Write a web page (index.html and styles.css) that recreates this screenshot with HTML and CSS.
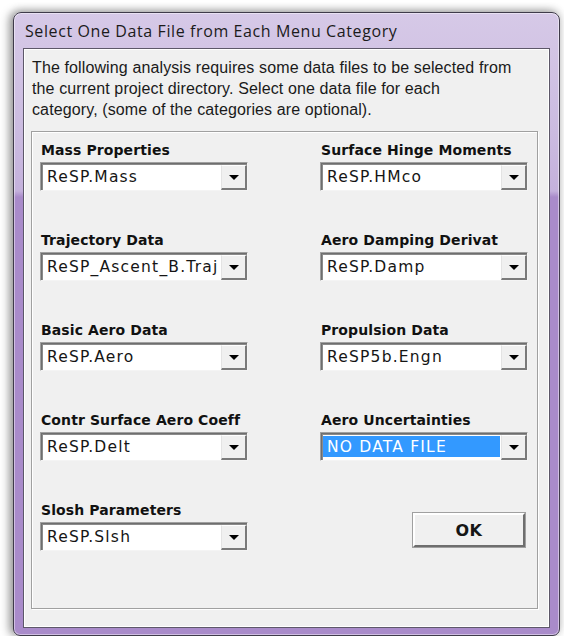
FILE: index.html
```html
<!DOCTYPE html>
<html lang="en">
<head>
<meta charset="utf-8">
<title>Select One Data File from Each Menu Category</title>
<link rel="stylesheet" href="styles.css">
</head>
<body>
<div class="window">
  <div class="titlebar">Select One Data File from Each Menu Category</div>
  <div class="client">
    <p class="intro">The following analysis requires some data files to be selected from<br>the current project directory. Select one data file for each<br>category, (some of the categories are optional).</p>
    <div class="group">
      <div class="field">
        <div class="label">Mass Properties</div>
        <div class="combo"><span class="value">ReSP.Mass</span><span class="drop"></span></div>
      </div>
      <div class="field">
        <div class="label">Surface Hinge Moments</div>
        <div class="combo"><span class="value">ReSP.HMco</span><span class="drop"></span></div>
      </div>
      <div class="field">
        <div class="label">Trajectory Data</div>
        <div class="combo"><span class="value">ReSP_Ascent_B.Traj</span><span class="drop"></span></div>
      </div>
      <div class="field">
        <div class="label">Aero Damping Derivat</div>
        <div class="combo"><span class="value">ReSP.Damp</span><span class="drop"></span></div>
      </div>
      <div class="field">
        <div class="label">Basic Aero Data</div>
        <div class="combo"><span class="value">ReSP.Aero</span><span class="drop"></span></div>
      </div>
      <div class="field">
        <div class="label">Propulsion Data</div>
        <div class="combo"><span class="value">ReSP5b.Engn</span><span class="drop"></span></div>
      </div>
      <div class="field">
        <div class="label">Contr Surface Aero Coeff</div>
        <div class="combo"><span class="value">ReSP.Delt</span><span class="drop"></span></div>
      </div>
      <div class="field">
        <div class="label">Aero Uncertainties</div>
        <div class="combo"><span class="value selected">NO DATA FILE</span><span class="drop"></span></div>
      </div>
      <div class="field">
        <div class="label">Slosh Parameters</div>
        <div class="combo"><span class="value">ReSP.Slsh</span><span class="drop"></span></div>
      </div>
      <div class="field actions">
        <button class="ok" type="button">OK</button>
      </div>
    </div>
  </div>
</div>
</body>
</html>
```
FILE: styles.css
```css
html, body {
  margin: 0;
  padding: 0;
  background: #ffffff;
}

body {
  width: 564px;
  height: 636px;
  overflow: hidden;
}

/* Aero-style dialog frame */
.window {
  box-sizing: border-box;
  width: 547px;
  height: 624px;
  margin: 12px 0 0 13px;
  padding: 0 9px 7px 9px;
  border: 1px solid #3f3b4a;
  border-radius: 8px 8px 7px 7px;
  background: linear-gradient(180deg, #d6c9e7 0px, #cbbbe0 120px, #c4b1dc 178px, #a98bca 184px, #a98bca 100%);
  box-shadow: -4px 0 10px rgba(0, 0, 0, 0.35), 0 -2px 8px rgba(0, 0, 0, 0.2), inset 0 0 0 1px rgba(255, 255, 255, 0.45);
  display: flex;
  flex-direction: column;
}

.titlebar {
  height: 35px;
  display: flex;
  align-items: center;
  padding-left: 2px;
  font-family: "Open Sans", "Noto Sans", sans-serif;
  font-size: 16px;
  letter-spacing: 0.6px;
  color: #1b1b1b;
}

.client {
  flex: 1;
  box-sizing: border-box;
  border: 1px solid #5d5869;
  background: #f0f0f0;
  box-shadow: inset 1px 1px 0 #ffffff, inset -1px -1px 0 #ffffff;
  padding: 8px 0 0 7px;
  display: flex;
  flex-direction: column;
}

.intro {
  margin: 0;
  padding-left: 1px;
  font-family: "Liberation Sans", Arial, sans-serif;
  font-size: 16px;
  letter-spacing: 0.12px;
  line-height: 21px;
  color: #1a1a1a;
}

/* Etched group box holding the file pickers */
.group {
  box-sizing: border-box;
  width: 507px;
  height: 478px;
  margin-top: 11px;
  border: 1px solid #a0a0a0;
  box-shadow: 1px 1px 0 #ffffff, inset 1px 1px 0 #ffffff;
  padding: 10px 0 0 8px;
  display: grid;
  grid-template-columns: 208px 208px;
  column-gap: 72px;
  row-gap: 41px;
  align-content: start;
}

.field {
  display: flex;
  flex-direction: column;
}

.label {
  height: 16px;
  line-height: 16px;
  margin-bottom: 4px;
  padding-left: 1px;
  font-family: "DejaVu Sans", Tahoma, sans-serif;
  font-weight: bold;
  font-size: 14px;
  letter-spacing: 0.1px;
  color: #111111;
  white-space: nowrap;
}

.combo {
  box-sizing: border-box;
  height: 29px;
  display: flex;
  align-items: stretch;
  background: #ffffff;
  border-top: 1px solid #a0a0a0;
  border-left: 1px solid #a0a0a0;
  border-right: 1px solid #f4f4f4;
  border-bottom: 1px solid #f4f4f4;
  box-shadow: inset 1px 1px 0 #6e6e6e, inset 2px 2px 0 #8a8a8a;
}

.value {
  flex: 1;
  display: flex;
  align-items: center;
  margin: 3px 1px 3px 2px;
  padding-left: 4px;
  font-family: "DejaVu Sans", Tahoma, sans-serif;
  font-size: 15.5px;
  letter-spacing: 1.2px;
  color: #151515;
  white-space: nowrap;
  overflow: hidden;
}

.value.selected {
  background: #3399ff;
  color: #ffffff;
}

/* Drop-down arrow button */
.drop {
  width: 26px;
  flex: none;
  position: relative;
  margin: 2px 0 0 0;
  background: #f0f0f0;
  border-left: 1px solid #e3e3e3;
  border-top: 1px solid #ffffff;
  border-right: 2px solid #7a7a7a;
  border-bottom: 2px solid #7a7a7a;
  box-sizing: border-box;
}

.drop::after {
  content: "";
  position: absolute;
  left: 50%;
  top: 50%;
  margin-left: -5px;
  margin-top: -2px;
  border-left: 5px solid transparent;
  border-right: 5px solid transparent;
  border-top: 5px solid #000000;
}

.actions {
  align-items: flex-end;
  padding-top: 11px;
}

.ok {
  box-sizing: border-box;
  width: 112px;
  height: 34px;
  margin-right: 3px;
  background: #f0f0f0;
  border-top: 2px solid #ffffff;
  border-left: 2px solid #ffffff;
  border-right: 2px solid #6e6e6e;
  border-bottom: 2px solid #6e6e6e;
  box-shadow: 0 0 0 1px #a0a0a0;
  font-family: "DejaVu Sans", Tahoma, sans-serif;
  font-size: 16px;
  font-weight: 600;
  letter-spacing: 0.5px;
  color: #151515;
  padding: 0;
}
```
